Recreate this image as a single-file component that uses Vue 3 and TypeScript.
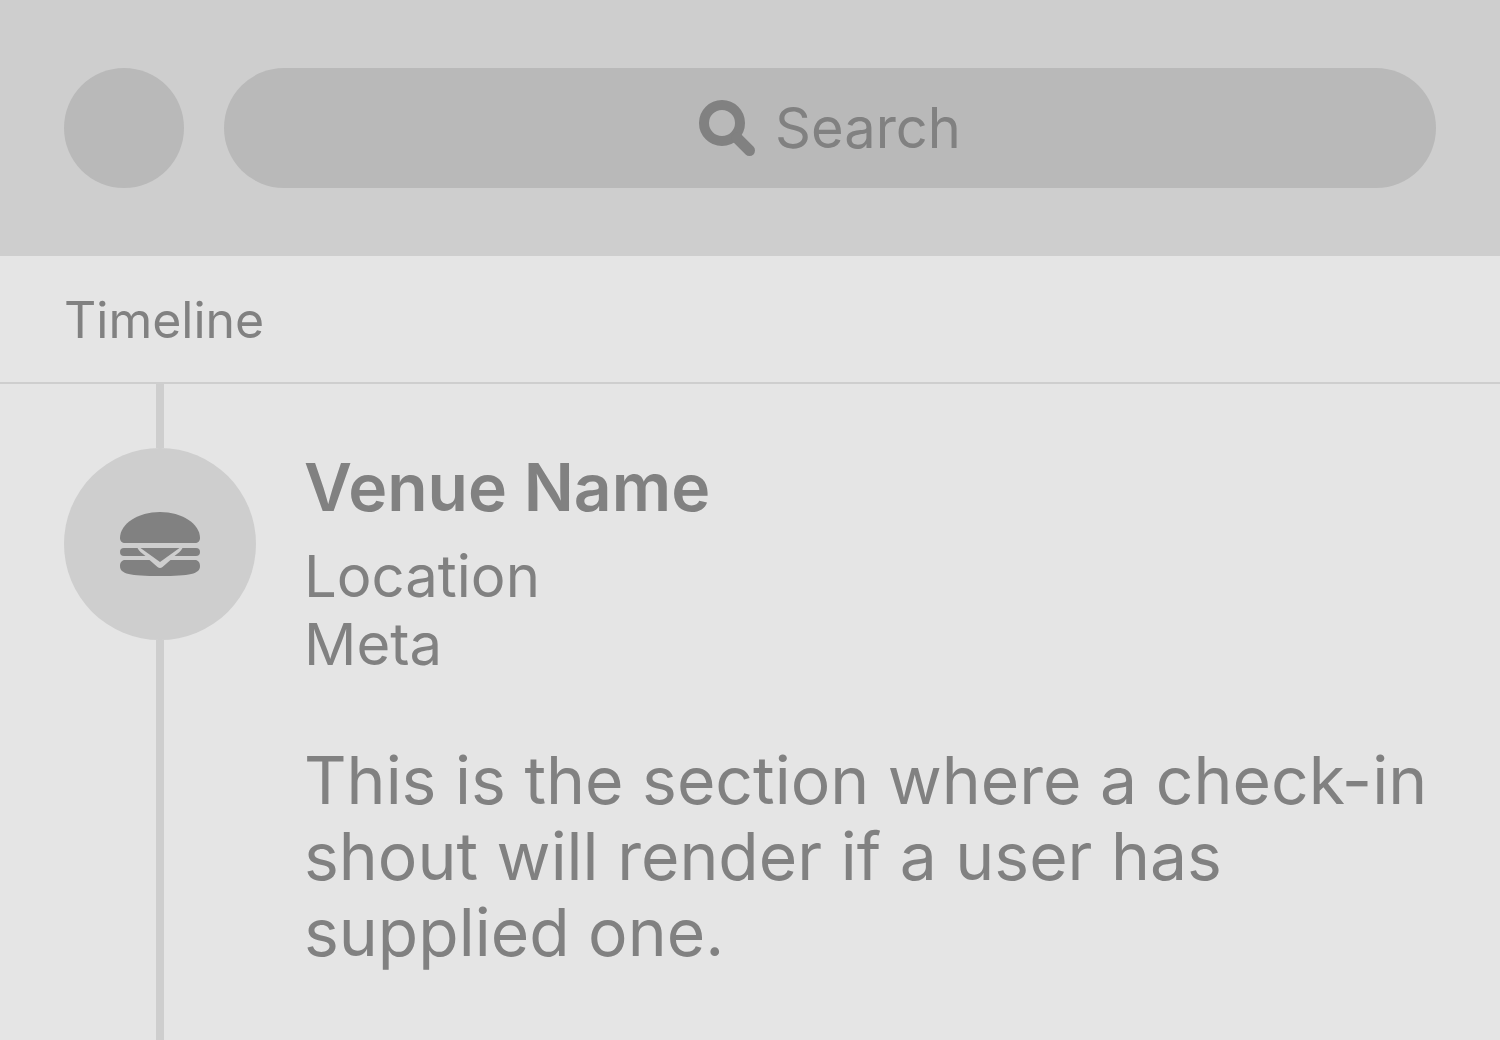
<script setup lang="ts">
import { ref } from 'vue'

interface CheckIn {
  id: number
  venue: string
  location: string
  meta: string
  shout: string
}

const query = ref('')

const checkIns: CheckIn[] = [
  {
    id: 1,
    venue: 'Venue Name',
    location: 'Location',
    meta: 'Meta',
    shout: 'This is the section where a check-in shout will render if a user has supplied one.',
  },
]
</script>

<template>
  <div class="app">
    <header class="topbar">
      <button class="avatar" type="button" aria-label="Profile"></button>
      <label class="search">
        <svg class="search-icon" viewBox="0 0 56 56" aria-hidden="true">
          <circle cx="23" cy="23" r="18" fill="none" stroke="currentColor" stroke-width="10" />
          <path d="M38 38 L50.5 50.5" fill="none" stroke="currentColor" stroke-width="11" stroke-linecap="round" />
        </svg>
        <input v-model="query" class="search-input" type="text" placeholder="Search" aria-label="Search" />
      </label>
    </header>

    <h1 class="section-title">Timeline</h1>

    <main class="timeline">
      <article v-for="item in checkIns" :key="item.id" class="entry">
        <div class="rail">
          <span class="line line-top"></span>
          <span class="badge">
            <svg class="burger" viewBox="0 0 80 64" fill="currentColor" aria-hidden="true">
              <path d="M40 0 C62 0 80 12 80 26 C80 29 78 31 75 31 H5 C2 31 0 29 0 26 C0 12 18 0 40 0 Z" />
              <path d="M4 36 H17.5 C19 39 22 41.500 25.500 44 H4 A4 4 0 0 1 4 36 Z" />
              <path d="M76 36 H62.500 C61 39 58 41.500 54.500 44 H76 A4 4 0 0 0 76 36 Z" />
              <path d="M20.500 36 H59.500 L40 50 Z" />
              <path d="M5 48 H29.500 L37.500 55 Q40 57 42.500 55 L50.500 48 H75 C78 48 80 50.500 80 54 C80 62 70 64 40 64 C10 64 0 62 0 54 C0 50.500 2 48 5 48 Z" />
            </svg>
          </span>
          <span class="line line-rest"></span>
        </div>
        <div class="body">
          <h2 class="venue">{{ item.venue }}</h2>
          <p class="detail">{{ item.location }}</p>
          <p class="detail">{{ item.meta }}</p>
          <p class="shout">{{ item.shout }}</p>
        </div>
      </article>
    </main>
  </div>
</template>

<style>
body {
  margin: 0;
  background: #e5e5e5;
}
</style>

<style scoped>
.app {
  box-sizing: border-box;
  display: flex;
  flex-direction: column;
  min-height: 100vh;
  background: #e5e5e5;
  color: #818181;
  font-family: Inter, "Liberation Sans", sans-serif;
}

.topbar {
  display: flex;
  align-items: center;
  gap: 40px;
  padding: 68px 64px;
  background: #cecece;
}

.avatar {
  flex: none;
  width: 120px;
  height: 120px;
  padding: 0;
  border: 0;
  border-radius: 50%;
  background: #b9b9b9;
}

.search {
  flex: 1;
  display: flex;
  align-items: center;
  justify-content: center;
  gap: 20px;
  height: 120px;
  border-radius: 60px;
  background: #b9b9b9;
}

.search-icon {
  flex: none;
  width: 56px;
  height: 56px;
}

.search-input {
  field-sizing: content;
  padding: 0;
  border: 0;
  outline: 0;
  background: transparent;
  color: #818181;
  font: inherit;
  font-size: 56px;
  line-height: 68px;
}

.search-input::placeholder {
  color: #818181;
  opacity: 1;
}

.section-title {
  margin: 0;
  padding: 32px 64px 30px;
  border-bottom: 2px solid #cecece;
  font-size: 50px;
  font-weight: 400;
  line-height: 64px;
}

.timeline {
  flex: 1;
  display: flex;
  flex-direction: column;
}

.entry {
  flex: 1;
  display: flex;
  gap: 48px;
  padding: 0 64px;
}

.rail {
  flex: none;
  display: flex;
  flex-direction: column;
  align-items: center;
}

.line {
  width: 8px;
  background: #cecece;
}

.line-top {
  height: 64px;
}

.line-rest {
  flex: 1;
}

.badge {
  display: flex;
  align-items: center;
  justify-content: center;
  width: 192px;
  height: 192px;
  border-radius: 50%;
  background: #cecece;
}

.burger {
  width: 80px;
  height: 64px;
}

.body {
  flex: 1;
  padding: 64px 0;
}

.venue {
  margin: 0 0 16px;
  font-size: 66px;
  font-weight: 600;
  line-height: 78px;
}

.detail {
  margin: 0;
  font-size: 58px;
  line-height: 68px;
}

.shout {
  margin: 64px 0 0;
  font-size: 66px;
  line-height: 76px;
}
</style>
